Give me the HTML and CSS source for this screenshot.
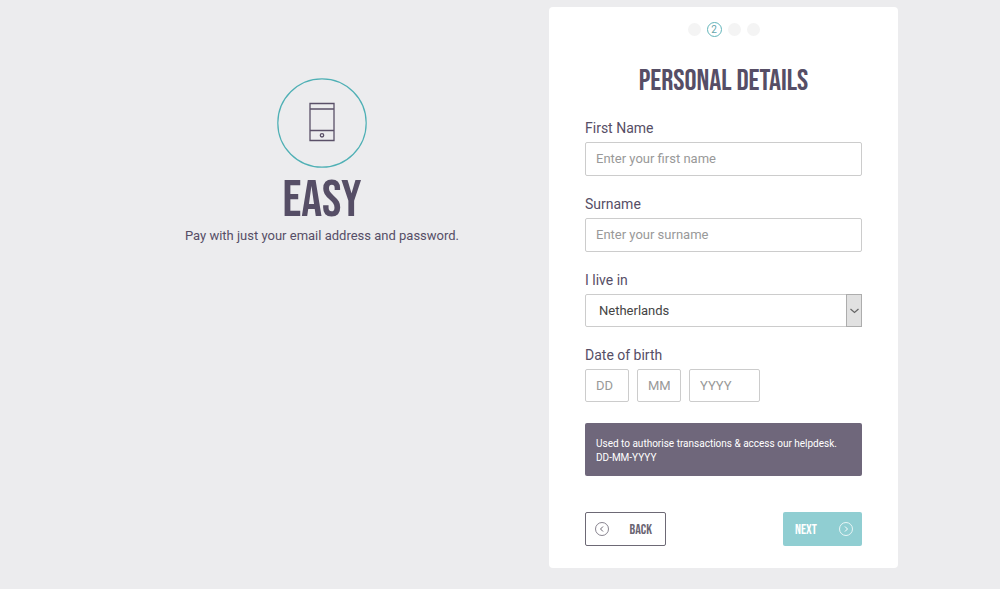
FILE: index.html
```html
<!DOCTYPE html>
<html lang="en">
<head>
<meta charset="utf-8">
<meta name="viewport" content="width=device-width, initial-scale=1">
<title>Personal details</title>
<link rel="stylesheet" href="styles.css">
</head>
<body>
<main class="page">
  <section class="intro">
    <svg class="intro-icon" viewBox="0 0 90 90" fill="none" aria-hidden="true">
      <circle cx="45" cy="45" r="44.2" stroke="#4fb0b5" stroke-width="1.2"/>
      <g stroke="#5a5068" stroke-width="1.3">
        <path d="M33 25.5h24v37H33zM33 31h24M33 52.5h24"/>
        <circle cx="45" cy="57.3" r="1.7"/>
      </g>
    </svg>
    <h1 class="intro-title">EASY</h1>
    <p class="intro-text">Pay with just your email address and password.</p>
  </section>

  <form class="card">
    <ol class="steps">
      <li class="step"></li>
      <li class="step step-current" aria-current="step">2</li>
      <li class="step"></li>
      <li class="step"></li>
    </ol>
    <h2 class="card-title">PERSONAL DETAILS</h2>

    <div class="field">
      <label class="label" for="first-name">First Name</label>
      <input class="input" id="first-name" type="text" placeholder="Enter your first name">
    </div>
    <div class="field">
      <label class="label" for="surname">Surname</label>
      <input class="input" id="surname" type="text" placeholder="Enter your surname">
    </div>
    <div class="field">
      <label class="label" for="country">I live in</label>
      <div class="select-wrap">
        <select class="select" id="country"><option>Netherlands</option></select>
        <span class="select-arrow" aria-hidden="true">
          <svg width="9" height="6" viewBox="0 0 9 6" fill="none"><path d="M.5 1l4 3.500 4-3.500" stroke="#666" stroke-width="1.2"/></svg>
        </span>
      </div>
    </div>
    <div class="field">
      <label class="label" for="day">Date of birth</label>
      <div class="date">
        <input class="input input-short" id="day" type="text" placeholder="DD" aria-label="Day of birth">
        <input class="input input-short" type="text" placeholder="MM" aria-label="Month of birth">
        <input class="input input-year" type="text" placeholder="YYYY" aria-label="Year of birth">
      </div>
    </div>

    <p class="note">Used to authorise transactions &amp; access our helpdesk. DD-MM-YYYY</p>

    <div class="actions">
      <button class="button button-back" type="button">
        <svg width="14" height="14" viewBox="0 0 14 14" fill="none" stroke="currentColor" aria-hidden="true"><circle cx="7" cy="7" r="6.5" stroke-width=".8"/><path d="M8 4.5L5.5 7 8 9.5"/></svg>
        <span>BACK</span>
      </button>
      <button class="button button-next" type="submit">
        <span>NEXT</span>
        <svg width="14" height="14" viewBox="0 0 14 14" fill="none" stroke="currentColor" aria-hidden="true"><circle cx="7" cy="7" r="6.5" stroke-width=".8"/><path d="M6 4.5L8.5 7 6 9.5"/></svg>
      </button>
    </div>
  </form>
</main>
</body>
</html>
```
FILE: styles.css
```css
* { box-sizing: border-box; }

body {
  margin: 0;
  background: #ececee;
  color: #564e66;
  font-family: Roboto, "Liberation Sans", sans-serif;
}

.page {
  display: grid;
  grid-template-columns: 454fr 349fr;
  align-items: start;
  padding: 7px 102px 21px 95px;
}

.intro {
  display: flex;
  flex-direction: column;
  align-items: center;
  padding-top: 71px;
  text-align: center;
}

.intro-icon { width: 90px; height: 90px; }

.intro-title,
.card-title,
.button {
  font-family: "Bebas Neue", "Oswald", "Roboto Condensed", sans-serif;
}

.intro-title {
  margin: 6px 0 0;
  font-size: 52px;
  line-height: 54px;
  font-weight: 400;
}

.intro-text {
  margin: 0;
  font-size: 13px;
  line-height: 16px;
}

.card {
  padding: 15px 36px 22px;
  background: #fff;
  border-radius: 4px;
}

.steps {
  display: flex;
  justify-content: center;
  align-items: center;
  gap: 6px;
  height: 15px;
  margin: 0;
  padding: 0;
  list-style: none;
}

.step {
  width: 13px;
  height: 13px;
  border-radius: 50%;
  background: #f4f4f4;
}

.step-current {
  width: 15px;
  height: 15px;
  border: 1px solid #62b5ba;
  background: #fff;
  color: #62a5ab;
  font-size: 10px;
  line-height: 13px;
  text-align: center;
}

.card-title {
  margin: 28px 0 22px;
  font-size: 30px;
  line-height: 32px;
  font-weight: 400;
  text-align: center;
}

.field { margin-bottom: 19px; }

.label {
  display: block;
  margin-bottom: 4px;
  font-size: 14px;
  line-height: 19px;
}

.input,
.select {
  display: block;
  width: 100%;
  height: 34px;
  padding: 0 10px;
  border: 1px solid #ccc;
  border-radius: 2px;
  background: #fff;
  color: #444;
  font-family: inherit;
  font-size: 13px;
}

.input { padding-bottom: 2px; }

.input::placeholder { color: #999; opacity: 1; }

.select-wrap { position: relative; }

.select {
  height: 33px;
  padding: 0 28px 0 13px;
  appearance: none;
}

.select-arrow {
  position: absolute;
  top: 0;
  right: 0;
  bottom: 0;
  display: flex;
  align-items: center;
  justify-content: center;
  width: 16px;
  border: 1px solid #adadad;
  background: #e1e1e1;
  pointer-events: none;
}

.date { display: flex; gap: 8px; }
.date .input { height: 33px; padding-bottom: 0; }
.date .input-short { width: 44px; }
.date .input-year { width: 71px; }

.note {
  margin: 21px 0 36px;
  padding: 14px 11px 11px;
  border-radius: 2px;
  background: #6f677b;
  color: #fff;
  font-size: 10px;
  line-height: 14px;
}

.actions { display: flex; justify-content: space-between; }

.button {
  display: flex;
  align-items: center;
  justify-content: space-between;
  height: 34px;
  padding: 0 12px;
  border: 0;
  border-radius: 2px;
  font-size: 14px;
}

.button-back {
  width: 81px;
  padding: 0 13px 0 9px;
  border: 1px solid #6d6975;
  background: #fff;
  color: #6a6572;
}

.button-next {
  width: 79px;
  padding: 0 9px 0 12px;
  background: #90ced2;
  color: #fff;
}
```
